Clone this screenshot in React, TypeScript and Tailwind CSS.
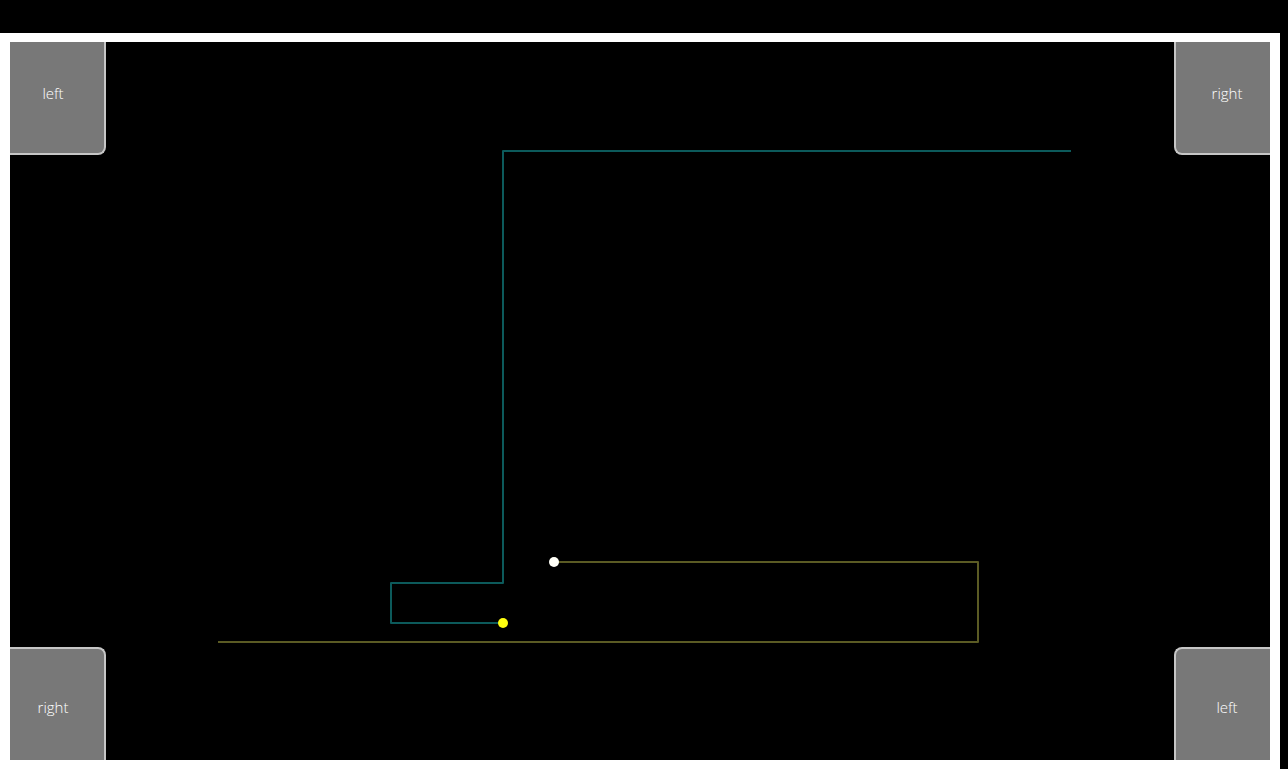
import React from "react";

const buttonBase =
  "flex h-[113px] w-24 items-center justify-center border-[#c6c6c6] bg-[#787878] font-['Open_Sans','Noto_Sans',sans-serif] text-[15px] leading-5 font-light text-white";

type Trail = { id: string; points: string; stroke: string; head: [number, number]; fill: string };

const trails: Trail[] = [
  {
    id: "teal",
    points: "1061,109 493,109 493,541 381,541 381,581 493,581",
    stroke: "#0c5a5b",
    head: [493, 581],
    fill: "#ffff10",
  },
  {
    id: "olive",
    points: "208,600 968,600 968,520 544,520",
    stroke: "#5b5b24",
    head: [544, 520],
    fill: "#fffff8",
  },
];

export default function App() {
  return (
    <div className="flex min-h-screen flex-col bg-black pt-[33px] pr-2">
      <main className="relative flex grow flex-col justify-between border-x-10 border-y-9 border-white bg-black">
        <svg
          className="pointer-events-none absolute inset-0 h-full w-full"
          viewBox="0 0 1260 718"
          role="img"
          aria-label="Playing field"
        >
          {trails.map((t) => (
            <g key={t.id}>
              <polyline points={t.points} fill="none" stroke={t.stroke} strokeWidth="2" strokeLinejoin="round" />
              <circle cx={t.head[0]} cy={t.head[1]} r="5" fill={t.fill} />
            </g>
          ))}
        </svg>
        <div className="flex justify-between">
          <button type="button" className={`${buttonBase} rounded-br-lg border-r-2 border-b-2 pr-2 pb-2.5`}>
            left
          </button>
          <button type="button" className={`${buttonBase} rounded-bl-lg border-b-2 border-l-2 pb-2.5 pl-2`}>
            right
          </button>
        </div>
        <div className="flex justify-between">
          <button type="button" className={`${buttonBase} rounded-tr-lg border-t-2 border-r-2 pt-1 pr-2`}>
            right
          </button>
          <button type="button" className={`${buttonBase} rounded-tl-lg border-t-2 border-l-2 pt-1 pl-2`}>
            left
          </button>
        </div>
      </main>
    </div>
  );
}
